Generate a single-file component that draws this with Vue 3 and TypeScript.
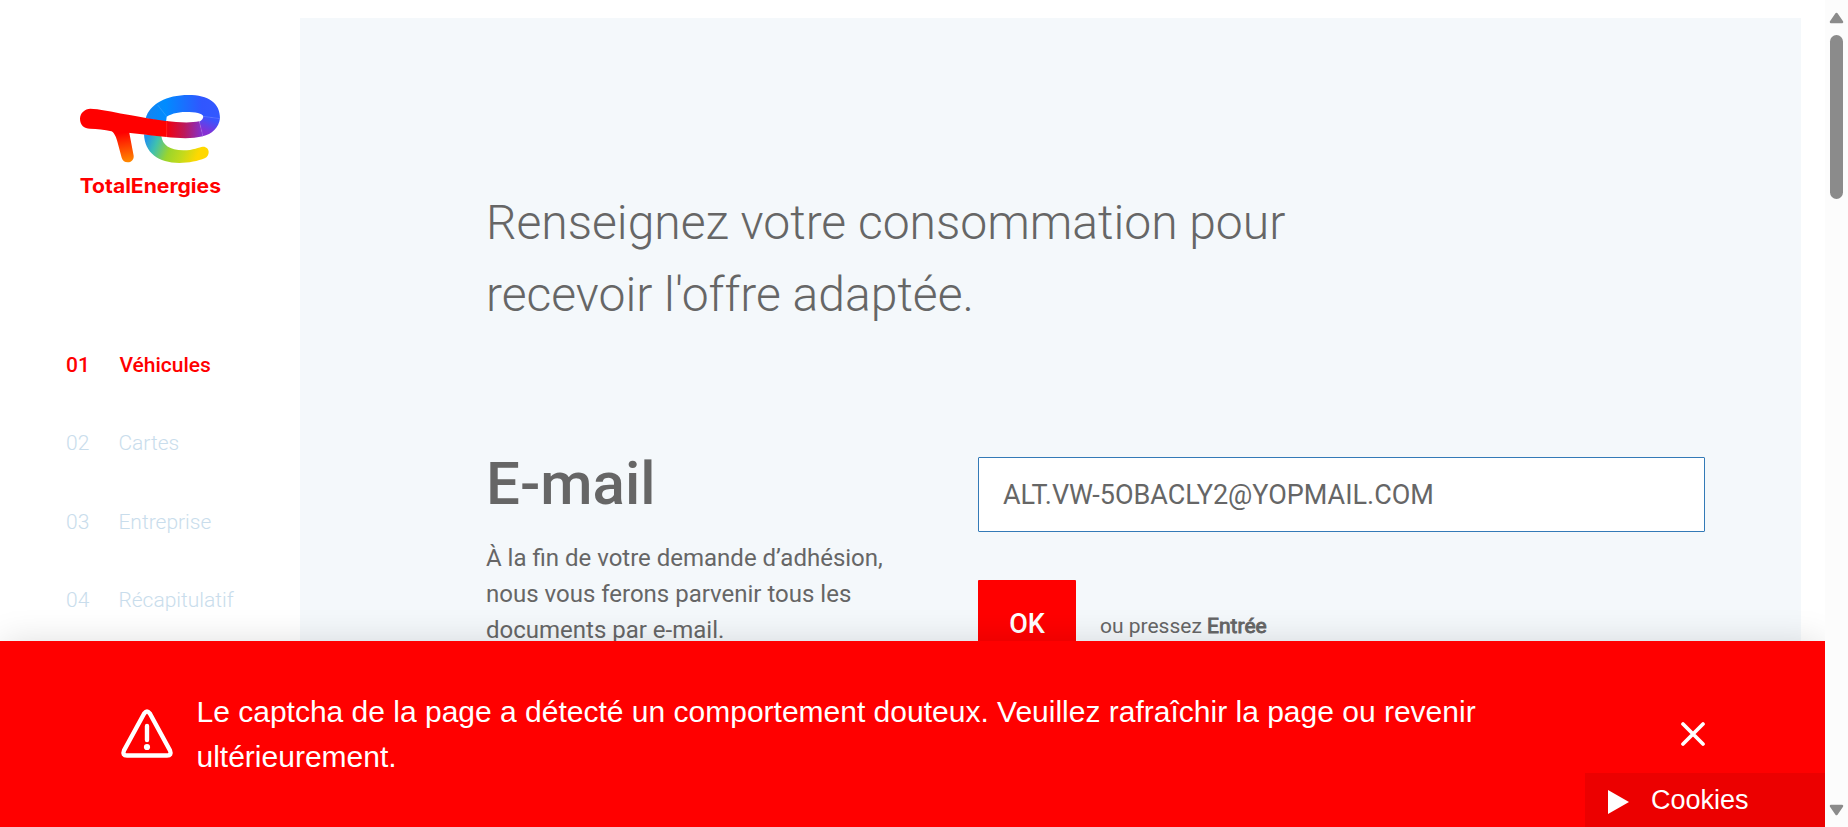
<script setup lang="ts">
import { ref } from 'vue'

interface Step {
  number: string
  label: string
}

const steps: Step[] = [
  { number: '01', label: 'Véhicules' },
  { number: '02', label: 'Cartes' },
  { number: '03', label: 'Entreprise' },
  { number: '04', label: 'Récapitulatif' },
]
const current = ref('01')
const email = ref('ALT.VW-5OBACLY2@YOPMAIL.COM')
const alertOpen = ref(true)
</script>

<template>
  <div class="window">
    <div class="page">
      <aside class="sidebar">
        <svg class="logo" viewBox="0 0 540 390" role="img" aria-label="TotalEnergies">
          <defs>
            <linearGradient id="loop" gradientUnits="userSpaceOnUse" x1="260" y1="100" x2="480" y2="100">
              <stop offset="0" stop-color="#1484f0" />
              <stop offset="0.25" stop-color="#008cff" />
              <stop offset="0.75" stop-color="#3056ff" />
              <stop offset="1" stop-color="#3358ff" />
            </linearGradient>
            <linearGradient id="turn" gradientUnits="userSpaceOnUse" x1="450" y1="112" x2="432" y2="150">
              <stop offset="0" stop-color="#3955ff" />
              <stop offset="1" stop-color="#8530d4" />
            </linearGradient>
            <linearGradient id="bar" gradientUnits="userSpaceOnUse" x1="320" y1="0" x2="425" y2="0">
              <stop offset="0" stop-color="#f4000c" />
              <stop offset="0.5" stop-color="#bd1859" />
              <stop offset="1" stop-color="#8330cd" />
            </linearGradient>
            <linearGradient id="leg" gradientUnits="userSpaceOnUse" x1="190" y1="155" x2="203" y2="244">
              <stop offset="0" stop-color="#ff0000" />
              <stop offset="1" stop-color="#ff8a00" />
            </linearGradient>
            <linearGradient id="tail" gradientUnits="userSpaceOnUse" x1="262" y1="165" x2="440" y2="235">
              <stop offset="0" stop-color="#2394e8" />
              <stop offset="0.17" stop-color="#3fc0b0" />
              <stop offset="0.4" stop-color="#9bd52c" />
              <stop offset="0.62" stop-color="#c3da1c" />
              <stop offset="0.85" stop-color="#ffd800" />
            </linearGradient>
          </defs>
          <path fill="url(#loop)" d="M257 112C270 68 320 42 385 42C445 42 481 66 480 113L430 107C429 97 405 93 378 93C350 93 327 101 320 108L318 124Z" />
          <path fill="url(#turn)" d="M480 112C477 140 455 160 428 166L418 122C426 118 430 112 430 106Z" />
          <path fill="url(#bar)" d="M319 120C350 124 390 127 418 121L429 166C396 174 357 172 319 168Z" />
          <path fill="url(#tail)" d="M252 160C254 215 295 246 358 246C386 246 415 240 434 232C442 228 446 221 446 213C446 203 438 196 428 197C419 198 399 208 370 208C329 208 307 191 304 165Z" />
          <path fill="url(#leg)" d="M150 146C164 155 169 169 173 185L185 230C188 239 194 244 203 244C214 244 222 236 221 224L208 156V140Z" />
          <path fill="#ff0000" d="M91 83C75 83 60 96 60 113C60 132 73 143 90 143C112 143 133 146 154 151C200 153 260 163 320 168L323 121C280 116 245 109 195 100C160 93 114 83 91 83Z" />
          <path class="seam" d="M293 72L322 109M320 121V168M430 106L480 113M418 122L429 166" />
          <text class="wordmark" x="59" y="335" textLength="424" lengthAdjust="spacingAndGlyphs">TotalEnergies</text>
        </svg>
        <nav class="steps">
          <div v-for="s in steps" :key="s.number" class="step" :class="{ active: s.number === current }">
            <span class="num">{{ s.number }}</span>
            <span class="label">{{ s.label }}</span>
          </div>
        </nav>
      </aside>

      <main class="panel">
        <h1>Renseignez votre consommation pour<br />recevoir l'offre adaptée.</h1>
        <section class="question">
          <div class="intro">
            <h2>E-mail</h2>
            <p>À la fin de votre demande d’adhésion, nous vous ferons parvenir tous les documents par e-mail.</p>
          </div>
          <form class="answer" @submit.prevent>
            <input v-model="email" class="field" type="text" aria-label="E-mail" />
            <div class="confirm">
              <button class="ok" type="submit">OK</button>
              <span class="hint">ou pressez <b>Entrée</b></span>
            </div>
          </form>
        </section>
      </main>

      <div v-if="alertOpen" class="alert">
        <svg class="warn" viewBox="0 0 54 50">
          <path d="M24.3 4.3 4 41.5Q2 46.5 7 46.5H47Q52 46.5 50 41.5L29.7 4.3Q27 .8 24.3 4.3Z" />
          <path d="M27 17V31" />
          <circle cx="27" cy="38" r="3.1" />
        </svg>
        <p>Le captcha de la page a détecté un comportement douteux. Veuillez rafraîchir la page ou revenir ultérieurement.</p>
        <button class="close" type="button" aria-label="Fermer" @click="alertOpen = false">
          <svg viewBox="0 0 24 24"><path d="M2 2 22 22M22 2 2 22" /></svg>
        </button>
      </div>

      <button class="cookies" type="button">
        <svg viewBox="0 0 21 24"><path d="M0 0 21 12 0 24Z" /></svg>
        <span>Cookies</span>
      </button>
    </div>

    <div class="scrollbar">
      <svg class="arrow" viewBox="0 0 15 12"><path d="M7.5 2 13 10H2Z" /></svg>
      <div class="thumb"></div>
      <svg class="arrow down" viewBox="0 0 15 12"><path d="M7.5 10 13 2H2Z" /></svg>
    </div>
  </div>
</template>

<style>
html,
body {
  margin: 0;
  overflow: hidden;
  background: #fff;
}
</style>

<style scoped>
.window {
  display: flex;
  width: 1848px;
  height: 827px;
  overflow: hidden;
  color: #666;
  font-family: Roboto, sans-serif;
}
.page {
  position: relative;
  display: flex;
  width: 1825px;
  overflow: hidden;
  background: #fff;
}
.sidebar {
  flex: none;
  width: 300px;
  padding-top: 80.6px;
  box-sizing: border-box;
}
.logo {
  display: block;
  width: 180px;
  height: 130px;
  margin-left: 60px;
}
.seam {
  fill: none;
  stroke: #fff;
  stroke-opacity: 0.2;
  stroke-width: 2;
}
.wordmark {
  fill: #f00;
  font: 700 60px Inter, sans-serif;
}
.steps {
  display: grid;
  grid-auto-rows: 78.5px;
  margin-top: 114.9px;
  padding-left: 66px;
}
.step {
  display: flex;
  align-items: center;
  color: #c9ddec;
  font-size: 21px;
  font-weight: 300;
}
.num {
  width: 52.4px;
}
.step.active {
  color: #f00;
  font-weight: 500;
}
.step.active .label {
  padding-left: 1px;
}
.panel {
  flex: none;
  width: 1501px;
  height: 1200px;
  margin-top: 18px;
  padding: 169px 96px 0 186px;
  box-sizing: border-box;
  background: #f4f8fb;
}
h1 {
  margin: 0;
  font-size: 48px;
  font-weight: 300;
  line-height: 72px;
}
.question {
  display: flex;
  justify-content: space-between;
  margin-top: 126px;
}
.intro {
  width: 410px;
}
h2 {
  margin: -9px 0 0;
  font-size: 60px;
  font-weight: 500;
  line-height: 72px;
}
.intro p {
  margin: 20px 0 0;
  font-size: 24px;
  line-height: 36px;
}
.answer {
  width: 727px;
}
.field {
  display: block;
  width: 100%;
  height: 75px;
  padding: 0 24px;
  box-sizing: border-box;
  border: 1px solid #337ab7;
  border-radius: 1px;
  outline: none;
  background: #fff;
  color: #666;
  font: 400 27px Roboto, sans-serif;
}
.confirm {
  display: flex;
  align-items: center;
  gap: 24px;
  margin-top: 48px;
}
.ok {
  width: 98px;
  height: 87px;
  padding: 0;
  border: 0;
  border-radius: 1px;
  background: #f00;
  color: #fff;
  font: 500 27px Roboto, sans-serif;
}
.hint {
  padding-top: 5px;
  font-size: 21px;
}
.hint b {
  font-weight: 400;
  -webkit-text-stroke: 0.9px #666;
}
.alert {
  position: absolute;
  left: 0;
  right: 0;
  bottom: 0;
  display: flex;
  align-items: center;
  height: 186px;
  padding: 0 120px;
  box-sizing: border-box;
  background: #f00;
  box-shadow: 0 0 34px -2px rgba(0, 0, 0, 0.14);
  color: #fff;
  font-family: 'Liberation Sans', Arial, sans-serif;
}
.alert p {
  width: 1320px;
  margin: 0 auto 0 22.5px;
  font-size: 30px;
  line-height: 45px;
}
.warn {
  flex: none;
  width: 54px;
  height: 50px;
  fill: none;
  stroke: #fff;
  stroke-width: 4.4;
  stroke-linecap: round;
}
.warn circle {
  fill: #fff;
  stroke: none;
}
.close {
  width: 24px;
  height: 24px;
  padding: 0;
  border: 0;
  background: none;
}
.close svg {
  display: block;
  fill: none;
  stroke: #fff;
  stroke-width: 3.7;
  stroke-linecap: round;
}
.cookies {
  position: absolute;
  right: 0;
  bottom: 0;
  display: flex;
  align-items: center;
  width: 240px;
  height: 54px;
  padding: 0 0 0 23px;
  border: 0;
  background: #ec0000;
  color: #fff;
  font: 27px 'Liberation Sans', Arial, sans-serif;
}
.cookies svg {
  width: 21px;
  height: 24px;
  margin: 4px 22px 0 0;
  fill: #fff;
}
.scrollbar {
  display: flex;
  flex-direction: column;
  align-items: center;
  width: 23px;
  padding: 12px 0 11px;
  box-sizing: border-box;
  background: #fcfcfc;
}
.arrow {
  width: 15px;
  height: 12px;
  fill: #8b8b8b;
  stroke: #8b8b8b;
  stroke-width: 2.5;
  stroke-linejoin: round;
}
.arrow.down {
  margin-top: auto;
}
.thumb {
  width: 13px;
  height: 164px;
  margin-top: 11px;
  border-radius: 7px;
  background: #8b8b8b;
}
</style>
